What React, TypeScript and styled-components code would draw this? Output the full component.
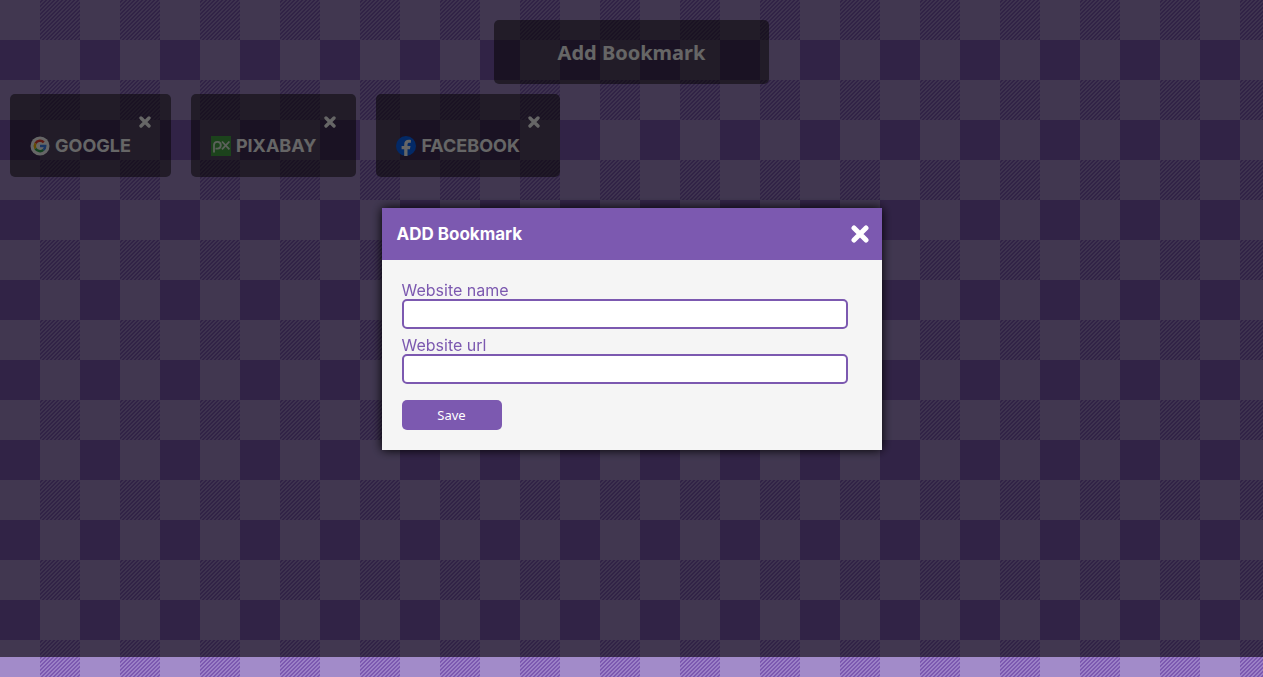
import React from 'react';
import styled, { createGlobalStyle } from 'styled-components';

const tile = `url("data:image/svg+xml,${encodeURIComponent(
  `<svg xmlns='http://www.w3.org/2000/svg' width='80' height='80'><path d='M0 0h40v40H0z M40 40h40v40H40z' fill='#a28bc9'/><defs><pattern id='h' width='4' height='4' patternUnits='userSpaceOnUse'><path shape-rendering='crispEdges' d='M0 3h2v1H0zM1 2h2v1H1zM2 1h2v1H2zM3 0h1v1H3zM0 0h1v1H0z' fill='#9b80c6'/></pattern></defs><path d='M40 0h40v40H40z' fill='url(#h)'/></svg>`,
)}")`;

const Global = createGlobalStyle`
  * { box-sizing: border-box; margin: 0; padding: 0; }
  body {
    min-height: 100vh;
    background: #7c59b0 ${tile};
    font-family: Karla, Inter, sans-serif;
  }
`;

const Page = styled.div`
  padding-top: 20px;
`;

const AddButton = styled.button`
  display: block;
  margin: 0 auto 10px;
  padding: 17px 64px 15px;
  border: 0;
  border-radius: 5px;
  background: rgba(8, 4, 0, 0.5);
  color: #fff;
  font: bold 20px/32px "Noto Sans", sans-serif;
`;

const Bookmarks = styled.ul`
  display: flex;
  flex-wrap: wrap;
  gap: 20px;
  padding: 0 10px;
  list-style: none;
`;

const Card = styled.li`
  display: flex;
  flex-direction: column;
  gap: 5px;
  padding: 20px;
  border-radius: 5px;
  background: rgba(8, 4, 0, 0.5);
  color: #fff;
`;

const SiteLink = styled.a`
  display: flex;
  align-items: center;
  gap: 5px;
  padding-right: 20px;
  color: #fff;
  font: bold 18px/22px Inter, sans-serif;
  text-decoration: none;
`;

const CloseButton = styled.button`
  display: flex;
  align-items: center;
  align-self: flex-end;
  height: 16px;
  border: 0;
  background: none;
  color: #fff;
`;

const Overlay = styled.div`
  position: fixed;
  inset: 0 0 20px;
  display: flex;
  align-items: center;
  justify-content: center;
  background: rgba(0, 0, 0, 0.6);
`;

const Dialog = styled.section`
  width: 500px;
  max-width: 100%;
  background: #f5f5f5;
  box-shadow: 0 0 10px #000;
`;

const DialogHeader = styled.header`
  display: flex;
  align-items: center;
  justify-content: space-between;
  height: 52px;
  padding: 0 13px 0 15px;
  background: #7c59b0;
  color: #fff;
`;

const DialogClose = styled(CloseButton)`
  align-self: center;
  height: 20px;
`;

const Title = styled.h1`
  font: bold 17px/20px Inter, sans-serif;
`;

const Form = styled.form`
  display: flex;
  flex-direction: column;
  align-items: flex-start;
  padding: 22px 20px 20px;
`;

const Label = styled.label`
  color: #7c59b0;
  font: 16px/17px Inter, sans-serif;
`;

const Input = styled.input`
  width: 97%;
  height: 30px;
  margin-bottom: 8px;
  padding: 0 5px;
  border: 2px solid #7c59b0;
  border-radius: 5px;
  background: #fff;
`;

const Save = styled.button`
  width: 100px;
  height: 30px;
  margin-top: 8px;
  border: 0;
  border-radius: 5px;
  background: #7c59b0;
  color: #fff;
  font: 13px "Noto Sans", sans-serif;
`;

const Cross = ({ size }: { size: number }) => (
  <svg width={size} height={size} viewBox="0 0 18 18" fill="none" stroke="currentColor" strokeWidth="5" strokeLinecap="round">
    <path d="M3 3 15 15M15 3 3 15" />
  </svg>
);

const GoogleIcon = () => (
  <svg width="20" height="20" viewBox="0 0 20 20" fill="none">
    <circle cx="10" cy="10" r="9.5" fill="#fff" />
    <g strokeWidth="2.5">
      <path d="M5.5 7.4A5.2 5.2 0 0 1 13.8 6.4" stroke="#ea4335" />
      <path d="M5.5 12.6A5.2 5.2 0 0 1 5.5 7.4" stroke="#fbbc05" />
      <path d="M13.4 13.9A5.2 5.2 0 0 1 5.5 12.6" stroke="#34a853" />
      <path d="M10 10h5.2A5.2 5.2 0 0 1 13.4 13.9" stroke="#4285f4" />
    </g>
  </svg>
);

const PixabayIcon = () => (
  <svg width="20" height="20" viewBox="0 0 20 20" fill="none">
    <path d="M0 0h20v20H0z" fill="#48a947" />
    <g stroke="#fff" strokeOpacity="0.85" strokeWidth="1.8">
      <path d="M3 16.5V9a3.4 3.4 0 1 1 3.4 3.6H4.5" />
      <path d="M11 5.5 18.4 13.4M18.4 5.5 11 13.4" />
    </g>
  </svg>
);

const FacebookIcon = () => (
  <svg width="20" height="20" viewBox="0 0 20 20">
    <circle cx="10" cy="10" r="10" fill="#0866ff" />
    <path d="M8.2 20v-6.8H5.6v-3.1h2.6V8.7c0-3.4 1.5-5 4.9-5 .6 0 1.4.1 1.8.2v2.9h-1.3c-1.6 0-2.1.6-2.1 2.1v1.2h3l-.6 3.1h-2.4V20z" fill="#fff" />
  </svg>
);

const sites = [
  { name: 'GOOGLE', url: 'https://google.com', Icon: GoogleIcon },
  { name: 'PIXABAY', url: 'https://pixabay.com', Icon: PixabayIcon },
  { name: 'FACEBOOK', url: 'https://facebook.com', Icon: FacebookIcon },
];

export default function App() {
  return (
    <Page>
      <Global />
      <AddButton type="button">Add Bookmark</AddButton>
      <Bookmarks>
        {sites.map(({ name, url, Icon }) => (
          <Card key={name}>
            <CloseButton type="button" aria-label={`Delete ${name}`}>
              <Cross size={12} />
            </CloseButton>
            <SiteLink href={url}>
              <Icon />
              {name}
            </SiteLink>
          </Card>
        ))}
      </Bookmarks>
      <Overlay>
        <Dialog role="dialog" aria-labelledby="dialog-title">
          <DialogHeader>
            <Title id="dialog-title">ADD Bookmark</Title>
            <DialogClose type="button" aria-label="Close">
              <Cross size={18} />
            </DialogClose>
          </DialogHeader>
          <Form>
            <Label htmlFor="name">Website name</Label>
            <Input id="name" type="text" />
            <Label htmlFor="url">Website url</Label>
            <Input id="url" type="url" />
            <Save type="button">Save</Save>
          </Form>
        </Dialog>
      </Overlay>
    </Page>
  );
}
